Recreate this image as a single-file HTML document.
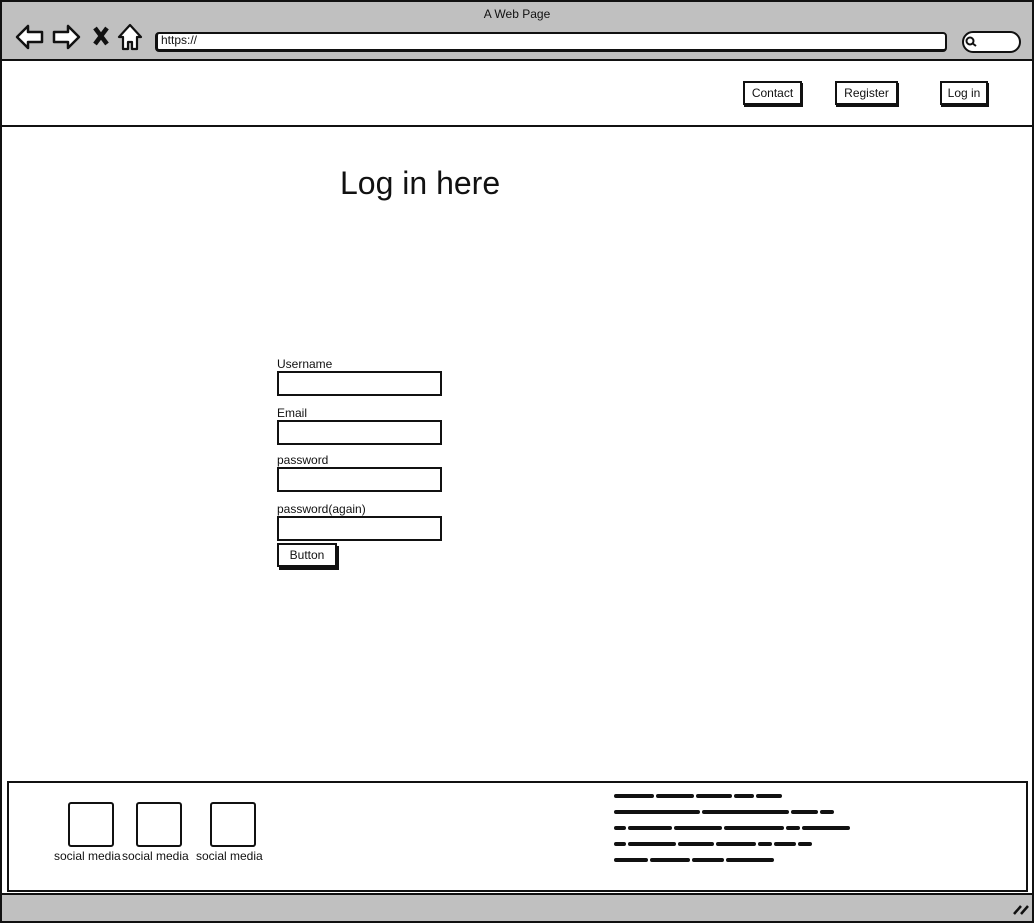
<!DOCTYPE html>
<html><head><meta charset="utf-8"><style>
*{margin:0;padding:0;box-sizing:border-box}
body{width:1034px;height:923px;position:relative;background:#fff;font-family:"Liberation Sans",sans-serif;color:#111;overflow:hidden}
.a{position:absolute}
.box{position:absolute;border:2px solid #111;background:#fff}
.t{position:absolute;font-size:12px;white-space:nowrap}
.btn{position:absolute;border:2px solid #111;background:#fff;font-size:12px;text-align:center;box-shadow:1px 2px 0 #111}
</style></head><body>
<div class="a" style="left:0;top:0;width:1034px;height:61px;background:#c0c0c0;border:2px solid #111;border-bottom:2px solid #111"></div>
<div class="t" style="left:0;width:1034px;text-align:center;top:7px">A Web Page</div>
<svg class="a" style="left:14px;top:22px" width="130" height="30" viewBox="0 0 130 30">
<path d="M3 15 L14 4 L14 10 L28 10 L28 20 L14 20 L14 26 Z" fill="#fff" stroke="#111" stroke-width="2.5" stroke-linejoin="round"/>
<path d="M65 15 L54 4 L54 10 L40 10 L40 20 L54 20 L54 26 Z" fill="#fff" stroke="#111" stroke-width="2.5" stroke-linejoin="round"/>
<path d="M81 6 L93 22 M93 6 L81 22" stroke="#111" stroke-width="4.5"/>
<path d="M116 3 L105 15 L109 15 L109 27 L114 27 L114 20 L118 20 L118 27 L123 27 L123 15 L127 15 Z" fill="#fff" stroke="#111" stroke-width="2.2" stroke-linejoin="round"/>
</svg>
<div class="box" style="left:155px;top:32px;width:792px;height:20px;border-radius:4px;border-width:2px 2px 3px 3px"></div>
<div class="t" style="left:161px;top:33px">https://</div>
<div class="box" style="left:962px;top:31px;width:59px;height:22px;border-radius:11px"></div>
<svg class="a" style="left:965px;top:36px" width="12" height="12"><circle cx="5" cy="5" r="3.5" fill="none" stroke="#111" stroke-width="2"/><path d="M7 7 L11 10" stroke="#111" stroke-width="2"/></svg>
<div class="a" style="left:0;top:60px;width:1034px;height:863px;border:2px solid #111;border-top:none"></div>
<div class="a" style="left:0;top:125px;width:1034px;height:2px;background:#111"></div>
<div class="btn" style="left:743px;top:81px;width:59px;height:24px;line-height:20px">Contact</div>
<div class="btn" style="left:835px;top:81px;width:63px;height:24px;line-height:20px">Register</div>
<div class="btn" style="left:940px;top:81px;width:48px;height:24px;line-height:20px">Log in</div>
<div class="t" style="left:340px;top:165px;font-size:32px">Log in here</div>
<div class="t" style="left:277px;top:357px">Username</div>
<div class="box" style="left:277px;top:371px;width:165px;height:25px"></div>
<div class="t" style="left:277px;top:406px">Email</div>
<div class="box" style="left:277px;top:420px;width:165px;height:25px"></div>
<div class="t" style="left:277px;top:453px">password</div>
<div class="box" style="left:277px;top:467px;width:165px;height:25px"></div>
<div class="t" style="left:277px;top:502px">password(again)</div>
<div class="box" style="left:277px;top:516px;width:165px;height:25px"></div>
<div class="btn" style="left:277px;top:543px;width:60px;height:24px;line-height:20px;box-shadow:2px 3px 0 #111">Button</div>
<div class="box" style="left:7px;top:781px;width:1021px;height:111px"></div>
<div class="box" style="left:68px;top:802px;width:46px;height:45px;border-radius:3px"></div>
<div class="box" style="left:136px;top:802px;width:46px;height:45px;border-radius:3px"></div>
<div class="box" style="left:210px;top:802px;width:46px;height:45px;border-radius:3px"></div>
<div class="t" style="left:54px;top:849px">social media</div>
<div class="t" style="left:122px;top:849px">social media</div>
<div class="t" style="left:196px;top:849px">social media</div>
<svg class="a" style="left:612px;top:790px" width="245" height="75">
<g stroke="#111" stroke-width="4" stroke-linecap="round">
<path d="M4 6H40M46 6H80M86 6H118M124 6H140M146 6H168"/>
<path d="M4 22H86M92 22H175M181 22H204M210 22H220"/>
<path d="M4 38H12M18 38H58M64 38H108M114 38H170M176 38H186M192 38H236"/>
<path d="M4 54H12M18 54H62M68 54H100M106 54H142M148 54H158M164 54H182M188 54H198"/>
<path d="M4 70H34M40 70H76M82 70H110M116 70H160"/>
</g></svg>
<div class="a" style="left:0;top:893px;width:1034px;height:30px;background:#c0c0c0;border:2px solid #111"></div>
<svg class="a" style="left:1012px;top:902px" width="18" height="14"><path d="M2 12L9 4M9 12L16 4" stroke="#111" stroke-width="2.5"/></svg>
</body></html>
